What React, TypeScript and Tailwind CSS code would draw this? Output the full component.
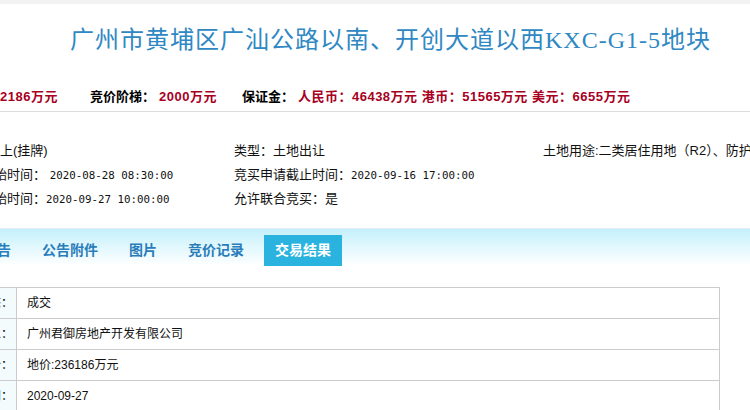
const sans = "font-['Liberation_Sans','Noto_Sans_CJK_SC',sans-serif]";
const num = "font-['DejaVu_Sans_Mono',monospace] text-[10.8px]";

const tabs = ["交易公告", "公告附件", "图片", "竞价记录", "交易结果"];

const results = [
  { label: "交易状态：", value: "成交" },
  { label: "竞得人：", value: "广州君御房地产开发有限公司" },
  { label: "成交价：", value: "地价:236186万元" },
  { label: "成交时间：", value: "2020-09-27" },
];

export default function App() {
  return (
    <div className={`w-[750px] h-[410px] overflow-hidden bg-white text-black ${sans}`}>
      <div className="h-[4px] bg-[#f2f2f2]" />

      {/* title */}
      <div className="mt-[20px] pl-[70px] whitespace-nowrap">
        <h1 className="text-[24px] leading-[32px] tracking-[1px] text-[#2f88c3] font-['Liberation_Serif','Noto_Sans_CJK_SC',serif]">
          广州市黄埔区广汕公路以南、开创大道以西KXC-G1-5地块
        </h1>
      </div>

      {/* price row */}
      <div className="mt-[31px] h-[25px] border-b border-[#dddddd] flex items-start whitespace-nowrap text-[13px] leading-[20px] font-bold">
        <div className="w-[58px] overflow-hidden flex justify-end shrink-0">
          <span className="text-[#a8001f] tracking-[0.5px]">起始价：172186万元</span>
        </div>
        <span className="ml-[32px]">竞价阶梯：</span>
        <span className="ml-[4px] text-[#a8001f] tracking-[0.5px]">2000万元</span>
        <span className="ml-[25px]">保证金：</span>
        <span className="ml-[4px] text-[#a8001f] tracking-[0.5px]">人民币：46438万元 港币：51565万元 美元：6655万元</span>
      </div>

      {/* info rows */}
      <div className="pt-[27px] text-[13px] leading-[23.5px] text-[#111] whitespace-nowrap">
        <div className="flex">
          <div className="w-[234px] overflow-hidden shrink-0">
            <div className="-ml-[13px]">网上(挂牌)</div>
          </div>
          <div className="w-[309px] shrink-0">类型：土地出让</div>
          <div>土地用途:二类居住用地（R2）、防护绿地</div>
        </div>
        <div className="flex">
          <div className="w-[234px] overflow-hidden shrink-0">
            <div className="-ml-[45px]">
              挂牌开始时间：&nbsp;<span className={num}>2020-08-28 08:30:00</span>
            </div>
          </div>
          <div>
            竞买申请截止时间：<span className={num}>2020-09-16 17:00:00</span>
          </div>
        </div>
        <div className="flex">
          <div className="w-[234px] overflow-hidden shrink-0">
            <div className="-ml-[45px]">
              竞价开始时间：<span className={num}>2020-09-27 10:00:00</span>
            </div>
          </div>
          <div>允许联合竞买：是</div>
        </div>
      </div>

      {/* tab bar */}
      <div className="mt-[16px] border-t border-[#e4eef2] bg-gradient-to-b from-[#c4f0fb] to-white h-[38px] pt-[6px] flex gap-[9px] whitespace-nowrap">
        <div className="w-[22px] overflow-hidden flex justify-end shrink-0">
          <span className="px-[11px] h-[31px] leading-[31px] text-[14px] font-bold text-[#2a7dbb]">交易公告</span>
        </div>
        {tabs.slice(1).map((t) => (
          <span
            key={t}
            className={
              t === "交易结果"
                ? "px-[11px] h-[31px] leading-[31px] text-[14px] font-bold text-white bg-[#29b3de]"
                : "px-[11px] h-[31px] leading-[31px] text-[14px] font-bold text-[#2a7dbb]"
            }
          >
            {t}
          </span>
        ))}
      </div>

      {/* result table */}
      <div className="mt-[21px] w-[720px] border-t border-r border-[#cccccc] text-[12px]">
        {results.map((r) => (
          <div key={r.label} className="flex h-[31px] border-b border-[#cccccc]">
            <div className="w-[17px] shrink-0 overflow-hidden flex justify-end items-center border-r border-[#cccccc] bg-[#f3fbfd] whitespace-nowrap">
              <span className="pr-[3px]">{r.label}</span>
            </div>
            <div className="flex items-center pl-[10px] text-[#111]">{r.value}</div>
          </div>
        ))}
      </div>
    </div>
  );
}
